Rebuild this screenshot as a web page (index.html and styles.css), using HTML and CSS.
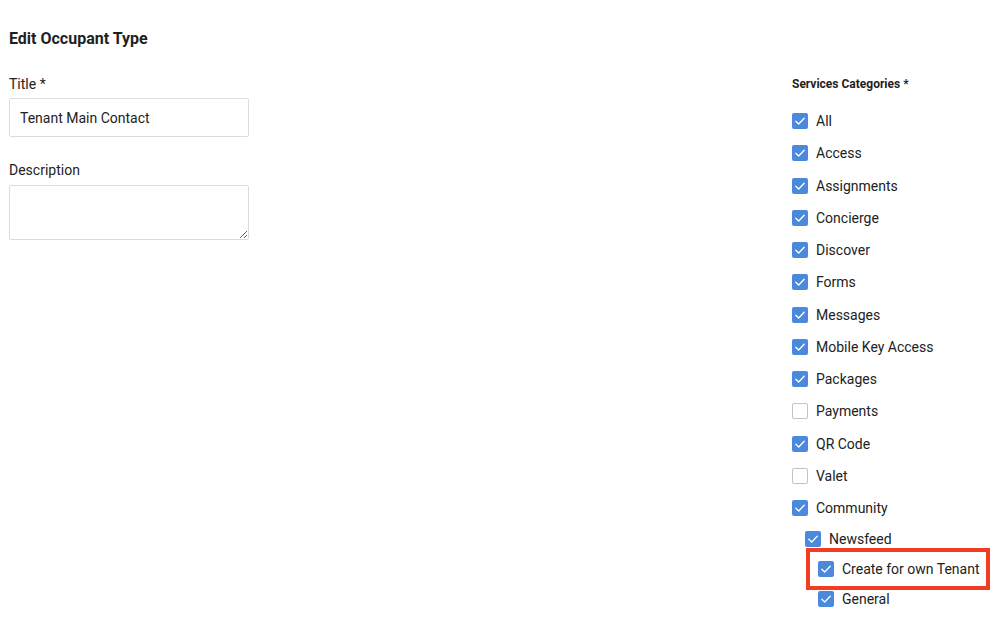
FILE: index.html
```html
<!DOCTYPE html>
<html lang="en">
<head>
<meta charset="utf-8">
<title>Edit Occupant Type</title>
<link rel="stylesheet" href="styles.css">
</head>
<body>
<div class="page">
  <div class="left">
    <h1 class="heading">Edit Occupant Type</h1>
    <label class="field-label">Title *</label>
    <input class="text-input" type="text" value="Tenant Main Contact">
    <label class="field-label desc-label">Description</label>
    <textarea class="text-area"></textarea>
  </div>
  <div class="right">
    <div class="cat-title">Services Categories *</div>
    <div class="cat-list">
      <div class="row"><span class="box on"><svg viewBox="0 0 16 16"><polyline points="3.8,8.2 6.7,11 12.2,5.2"/></svg></span><span class="txt">All</span></div>
      <div class="row"><span class="box on"><svg viewBox="0 0 16 16"><polyline points="3.8,8.2 6.7,11 12.2,5.2"/></svg></span><span class="txt">Access</span></div>
      <div class="row"><span class="box on"><svg viewBox="0 0 16 16"><polyline points="3.8,8.2 6.7,11 12.2,5.2"/></svg></span><span class="txt">Assignments</span></div>
      <div class="row"><span class="box on"><svg viewBox="0 0 16 16"><polyline points="3.8,8.2 6.7,11 12.2,5.2"/></svg></span><span class="txt">Concierge</span></div>
      <div class="row"><span class="box on"><svg viewBox="0 0 16 16"><polyline points="3.8,8.2 6.7,11 12.2,5.2"/></svg></span><span class="txt">Discover</span></div>
      <div class="row"><span class="box on"><svg viewBox="0 0 16 16"><polyline points="3.8,8.2 6.7,11 12.2,5.2"/></svg></span><span class="txt">Forms</span></div>
      <div class="row"><span class="box on"><svg viewBox="0 0 16 16"><polyline points="3.8,8.2 6.7,11 12.2,5.2"/></svg></span><span class="txt">Messages</span></div>
      <div class="row"><span class="box on"><svg viewBox="0 0 16 16"><polyline points="3.8,8.2 6.7,11 12.2,5.2"/></svg></span><span class="txt">Mobile Key Access</span></div>
      <div class="row"><span class="box on"><svg viewBox="0 0 16 16"><polyline points="3.8,8.2 6.7,11 12.2,5.2"/></svg></span><span class="txt">Packages</span></div>
      <div class="row"><span class="box off"></span><span class="txt">Payments</span></div>
      <div class="row"><span class="box on"><svg viewBox="0 0 16 16"><polyline points="3.8,8.2 6.7,11 12.2,5.2"/></svg></span><span class="txt">QR Code</span></div>
      <div class="row"><span class="box off"></span><span class="txt">Valet</span></div>
      <div class="row"><span class="box on"><svg viewBox="0 0 16 16"><polyline points="3.8,8.2 6.7,11 12.2,5.2"/></svg></span><span class="txt">Community</span></div>
      <div class="sub-list">
        <div class="row indent1"><span class="box on"><svg viewBox="0 0 16 16"><polyline points="3.8,8.2 6.7,11 12.2,5.2"/></svg></span><span class="txt">Newsfeed</span></div>
        <div class="row indent2 highlighted"><span class="box on"><svg viewBox="0 0 16 16"><polyline points="3.8,8.2 6.7,11 12.2,5.2"/></svg></span><span class="txt">Create for own Tenant</span><span class="mark"></span></div>
        <div class="row indent2"><span class="box on"><svg viewBox="0 0 16 16"><polyline points="3.8,8.2 6.7,11 12.2,5.2"/></svg></span><span class="txt">General</span></div>
      </div>
    </div>
  </div>
</div>
</body>
</html>
```

FILE: styles.css
```css
html, body {
  margin: 0;
  padding: 0;
  background: #ffffff;
}

body {
  font-family: Roboto, "Liberation Sans", Arial, sans-serif;
  color: #212121;
  width: 997px;
  height: 618px;
  overflow: hidden;
}

.page {
  display: flex;
  justify-content: space-between;
  padding-left: 9px;
}

.left {
  width: 240px;
  display: flex;
  flex-direction: column;
}

.heading {
  margin: 29px 0 0 0;
  font-size: 16px;
  line-height: 20px;
  font-weight: 700;
  color: #1f1f1f;
}

.field-label {
  display: block;
  margin-top: 25px;
  font-size: 14px;
  line-height: 20px;
  color: #222;
}

.desc-label {
  margin-top: 23px;
}

.text-input {
  box-sizing: border-box;
  margin-top: 4px;
  width: 240px;
  height: 39px;
  border: 1px solid #dcdcdc;
  border-radius: 2px;
  padding: 0 10px;
  font-family: Roboto, "Liberation Sans", Arial, sans-serif;
  font-size: 14px;
  color: #222;
  outline: none;
}

.text-area {
  box-sizing: border-box;
  margin-top: 5px;
  width: 240px;
  height: 55px;
  border: 1px solid #dcdcdc;
  border-radius: 2px;
  padding: 8px 10px;
  font-family: Roboto, "Liberation Sans", Arial, sans-serif;
  font-size: 14px;
  resize: both;
  outline: none;
}

.right {
  width: 205px;
  display: flex;
  flex-direction: column;
}

.cat-title {
  margin-top: 76px;
  font-size: 12px;
  line-height: 16px;
  font-weight: 700;
  color: #1f1f1f;
}

.cat-list {
  margin-top: 21px;
  display: grid;
  grid-auto-rows: auto;
  row-gap: 16.25px;
}

.sub-list {
  margin-top: -1.25px;
  display: grid;
  row-gap: 14px;
}

.row {
  position: relative;
  display: flex;
  align-items: center;
  gap: 8px;
  height: 16px;
  font-size: 14px;
  line-height: 16px;
}

.indent1 {
  padding-left: 13px;
}

.indent2 {
  padding-left: 26px;
}

.box {
  box-sizing: border-box;
  flex: none;
  width: 16px;
  height: 16px;
  border-radius: 2px;
  display: flex;
  align-items: center;
  justify-content: center;
}

.box.on {
  background: #4a89dc;
}

.box.off {
  background: #ffffff;
  border: 1.5px solid #c2c2c2;
}

.box svg {
  width: 16px;
  height: 16px;
}

.box svg polyline {
  fill: none;
  stroke: #ffffff;
  stroke-width: 1.3;
  stroke-linecap: round;
  stroke-linejoin: round;
}

.txt {
  color: #222;
  white-space: nowrap;
}

.mark {
  position: absolute;
  left: 14px;
  top: -13px;
  width: 184px;
  height: 42px;
  box-sizing: border-box;
  border: 4px solid #f23d22;
  pointer-events: none;
}
```
